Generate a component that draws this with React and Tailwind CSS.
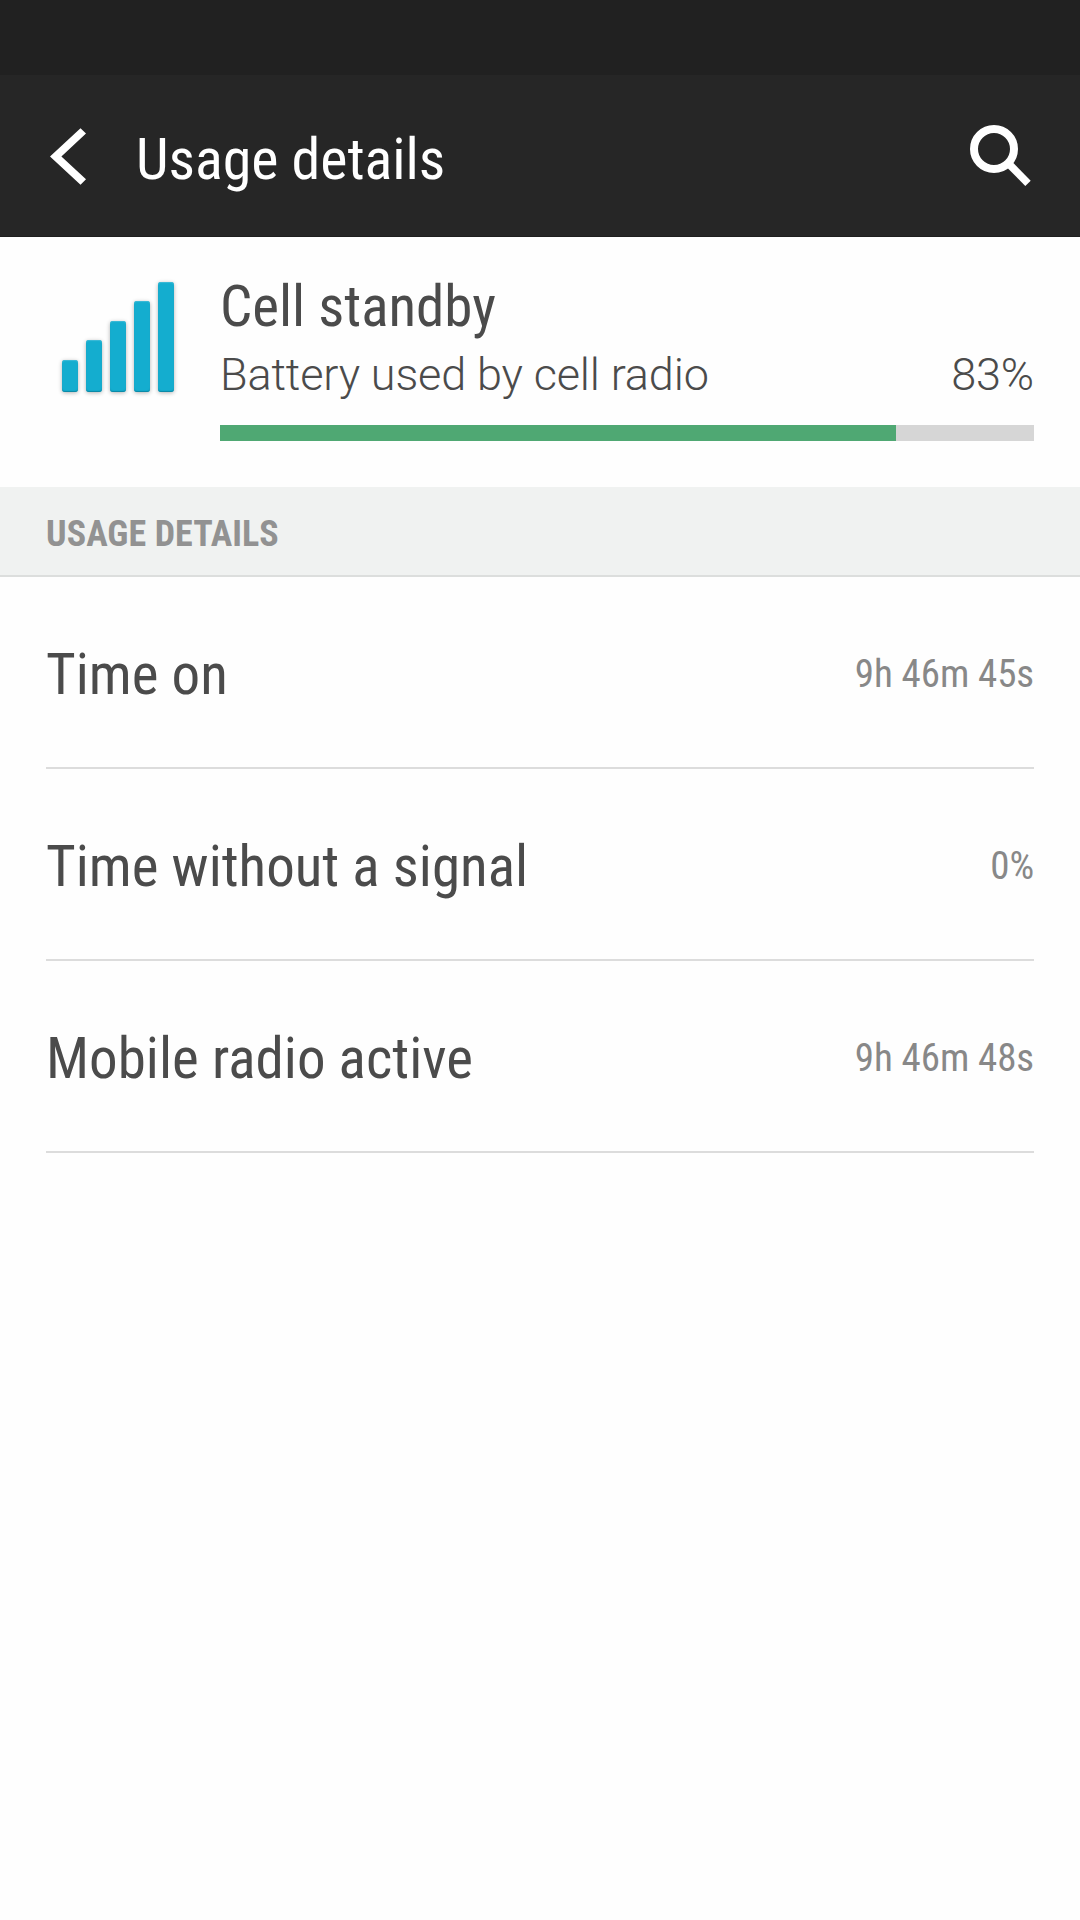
import { useState } from 'react'

const rows = [
  { label: 'Time on', value: '9h 46m 45s' },
  { label: 'Time without a signal', value: '0%' },
  { label: 'Mobile radio active', value: '9h 46m 48s' },
]

function SignalIcon(){
  return (
    <div className="flex items-end gap-2 mt-[45px] ml-[62px] w-[112px] h-[110px]">
      <Bar className="h-[32px]" />
      <Bar className="h-[52px]" />
      <Bar className="h-[71px]" />
      <Bar className="h-[91px]" />
      <Bar className="h-[110px]" />
    </div>
  )
}

function Bar({ className }){
  return <div className={`w-4 rounded-[3px] bg-[#14adcf] shadow-[inset_0_1px_1px_#3dbbd7,inset_0_-1px_1px_#0b87a3,0_1px_4px_rgba(0,0,0,0.3)] ${className}`} />
}

function Header(){
  return (
    <header className="flex items-center justify-between h-[162px] pt-[6px] bg-[#262626] border-b border-[#1e1e1e] text-white">
      <div className="flex items-center">
        <button className="w-9 h-[57px] ml-[50px] mr-[50px] mb-[5px]" aria-label="Back">
          <svg width="36" height="57" viewBox="0 0 36 57" fill="currentColor">
            <path d="M30.5 0.2 36 5.6 11.4 28.5 36 51.3 30.5 56.8 0 28.5z" />
          </svg>
        </button>
        <h1 className="text-[58px] leading-[68px] tracking-[-0.05px]">Usage details</h1>
      </div>
      <button className="w-[62px] h-[62px] mr-[48px] mb-[5px]" aria-label="Search">
        <svg width="62" height="62" viewBox="0 0 62 62" fill="none" stroke="currentColor">
          <circle cx="24" cy="24" r="20" strokeWidth="8" />
          <path d="M38.5 38.5 58 58.3" strokeWidth="7.6" />
        </svg>
      </button>
    </header>
  )
}

export default function App(){
  const [percent] = useState(83)

  return (
    <div className="w-[1080px] h-[1920px] overflow-hidden bg-[#fefefe] text-[#4b4b4b] font-['Roboto_Condensed','Roboto',sans-serif]">
      {/* status bar */}
      <div className="h-[75px] bg-[#212121]" />
      <Header />

      <section className="flex h-[250px]">
        <div className="w-[220px]">
          <SignalIcon />
        </div>
        <div className="w-[814px] pt-9">
          <h2 className="text-[57px] leading-[67px]">Cell standby</h2>
          <div className="flex justify-between mt-2 text-[45px] leading-[53px] font-light font-['Roboto',sans-serif] tracking-[-0.13px]">
            <span>Battery used by cell radio</span>
            <span>{percent}%</span>
          </div>
          <div className="h-4 mt-6 bg-[#d6d6d6]">
            <div className="h-4 bg-[#4fa873]" style={{ width: percent + '%' }} />
          </div>
        </div>
      </section>

      <h3 className="h-[90px] pt-[26px] pl-[46px] bg-[#f0f2f1] border-b-2 border-[#dcdedd] text-[36px] leading-[42px] font-bold tracking-[0.08px] text-[#929292]">USAGE DETAILS</h3>

      <ul className="px-[46px]">
        {rows.map(r => (
          <li key={r.label} className="flex items-center justify-between h-[192px] pt-[5px] border-b-2 border-[#dcdcdc]">
            <span className="text-[57px] leading-[67px] tracking-[0.02px]">{r.label}</span>
            <span className="mb-px text-[39px] leading-[46px] tracking-[-0.1px] text-[#888888]">{r.value}</span>
          </li>
        ))}
      </ul>
    </div>
  )
}
